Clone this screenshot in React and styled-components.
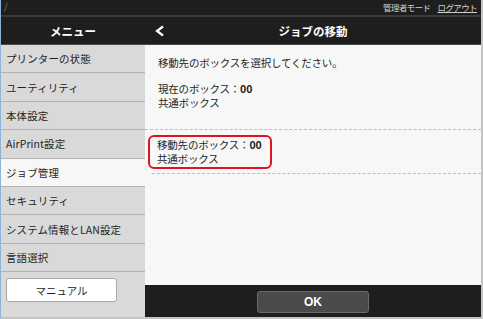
import React from "react";
import styled, { createGlobalStyle } from "styled-components";

const Global = createGlobalStyle`
  html, body { margin: 0; padding: 0; background: #ffffff; overflow: hidden; }
  body { font-family: "Noto Sans CJK JP", "Noto Sans", "Liberation Sans", sans-serif; }
  * { box-sizing: border-box; }
`;

const Frame = styled.div`
  width: 483px;
  height: 319px;
  display: flex;
  flex-direction: column;
  border-left: 1px solid #8db4d8;
  border-right: 2px solid #c4c4c4;
  border-bottom: 2px solid #c4c4c4;
  background: #1e1e1e;
`;

const TopBar = styled.div`
  height: 17px;
  flex: none;
  display: flex;
  align-items: center;
  justify-content: space-between;
  padding: 0 4px 2px 3px;
  background: #1e1e1e;
  border-bottom: 2px solid #3b3b3b;
  color: #cfcfcf;
  font-size: 8.5px;
  letter-spacing: -0.6px;
`;

const Mark = styled.span`
  color: #a88456;
  font-size: 9px;
`;

const TopLinks = styled.div`
  display: flex;
  gap: 7px;
`;

const Logout = styled.span`
  text-decoration: underline;
`;

const Header = styled.div`
  height: 28px;
  flex: none;
  display: flex;
  background: #1e1e1e;
  border-bottom: 1px solid #4a4a4a;
  color: #ffffff;
  font-weight: 700;
  font-size: 11.5px;
`;

const HeaderMenu = styled.div`
  width: 144px;
  display: flex;
  align-items: center;
  justify-content: center;
`;

const HeaderMain = styled.div`
  flex: 1;
  position: relative;
  display: flex;
  align-items: center;
  justify-content: center;
`;

const Back = styled.svg`
  position: absolute;
  left: 9px;
  top: 8px;
`;

const Body = styled.div`
  flex: 1;
  display: flex;
  min-height: 0;
`;

const Sidebar = styled.div`
  width: 144px;
  display: flex;
  flex-direction: column;
  background: #d9d9d9;
`;

const Item = styled.div`
  height: 28.4px;
  flex: none;
  display: flex;
  align-items: center;
  padding-left: 5px;
  font-size: 10.5px;
  letter-spacing: 0.1px;
  white-space: nowrap;
  color: #1f1f1f;
  background: ${(p) => (p.$active ? "#f7f7f7" : "#d9d9d9")};
  border-bottom: 1px solid #b2b2b2;
`;

const ManualArea = styled.div`
  flex: 1;
  padding: 6px 0 0 5px;
`;

const ManualButton = styled.div`
  width: 111px;
  height: 24px;
  display: flex;
  align-items: center;
  justify-content: center;
  background: #ffffff;
  border: 1px solid #a9a9a9;
  border-radius: 3px;
  font-size: 10.5px;
  letter-spacing: 0;
  color: #1f1f1f;
`;

const Main = styled.div`
  flex: 1;
  display: flex;
  flex-direction: column;
`;

const Content = styled.div`
  flex: 1;
  background: #f7f7f7;
  color: #1f1f1f;
  font-size: 10.5px;
  letter-spacing: -0.2px;
  line-height: 14px;
`;

const Intro = styled.div`
  padding: 11px 0 0 13px;
`;

const Section = styled.div`
  padding: 12px 0 19px 13px;
  border-bottom: 1px dashed #bdbdbd;
`;

const Line = styled.div``;

const Num = styled.b`
  font-weight: 700;
  letter-spacing: 0;
`;

const Selected = styled.div`
  margin: 0 0 0 7px;
  padding: 5px 0 4px 0;
  border-bottom: 1px dashed #bdbdbd;
`;

const RedBox = styled.div`
  display: inline-block;
  margin-left: -4px;
  padding: 1px 8px 1px 7px;
  border: 2px solid #e0141e;
  border-radius: 6px;
`;

const BottomBar = styled.div`
  height: 32px;
  flex: none;
  display: flex;
  justify-content: center;
  padding-top: 6px;
  background: #1e1e1e;
`;

const OkButton = styled.div`
  width: 112px;
  height: 22px;
  display: flex;
  align-items: center;
  justify-content: center;
  background: #4a4a4a;
  border: 1px solid #6a6a6a;
  border-radius: 3px;
  color: #ffffff;
  font-family: "Liberation Sans", sans-serif;
  font-weight: 700;
  font-size: 12px;
`;

const items = [
  "プリンターの状態",
  "ユーティリティ",
  "本体設定",
  "AirPrint設定",
  "ジョブ管理",
  "セキュリティ",
  "システム情報とLAN設定",
  "言語選択",
];

export default function App() {
  return (
    <>
      <Global />
      <Frame>
        <TopBar>
          <Mark>/</Mark>
          <TopLinks>
            <span>管理者モード</span>
            <Logout>ログアウト</Logout>
          </TopLinks>
        </TopBar>
        <Header>
          <HeaderMenu>メニュー</HeaderMenu>
          <HeaderMain>
            <Back width="12" height="12" viewBox="0 0 12 12">
              <polyline points="9,1.5 3,6 9,10.5" fill="none" stroke="#ffffff" strokeWidth="2.2" />
            </Back>
            ジョブの移動
          </HeaderMain>
        </Header>
        <Body>
          <Sidebar>
            {items.map((t) => (
              <Item key={t} $active={t === "ジョブ管理"}>{t}</Item>
            ))}
            <ManualArea>
              <ManualButton>マニュアル</ManualButton>
            </ManualArea>
          </Sidebar>
          <Main>
            <Content>
              <Intro>移動先のボックスを選択してください。</Intro>
              <Section>
                <Line>現在のボックス：<Num>00</Num></Line>
                <Line>共通ボックス</Line>
              </Section>
              <Selected>
                <RedBox>
                  <Line>移動先のボックス：<Num>00</Num></Line>
                  <Line>共通ボックス</Line>
                </RedBox>
              </Selected>
            </Content>
            <BottomBar>
              <OkButton>OK</OkButton>
            </BottomBar>
          </Main>
        </Body>
      </Frame>
    </>
  );
}
